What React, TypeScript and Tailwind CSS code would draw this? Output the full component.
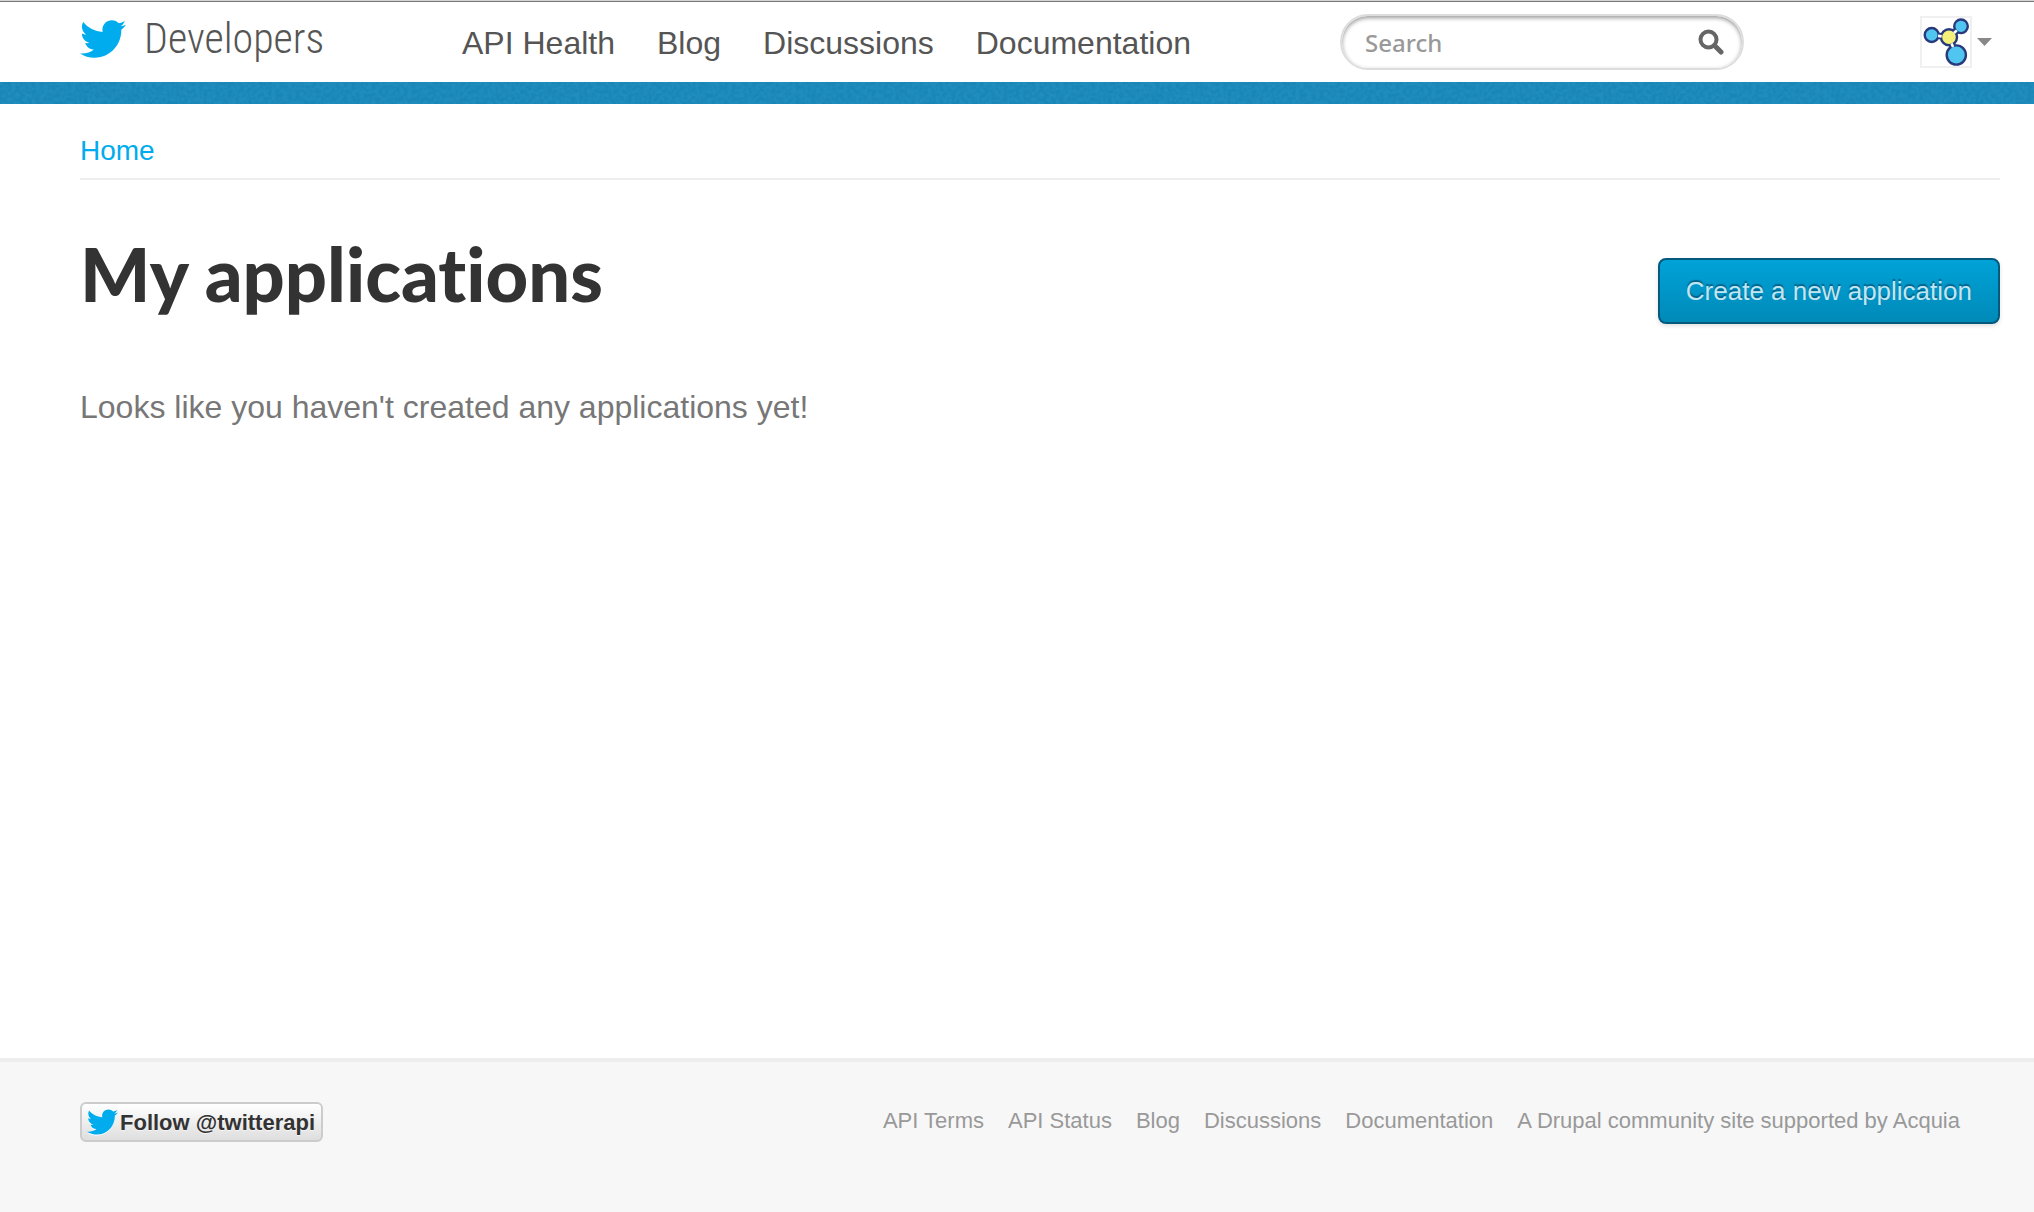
function Bird({ className }: { className: string }) {
  return (
    <svg viewBox="0 48 512 416" className={className} fill="#00aced" aria-hidden="true">
      <path d="M459.37 151.716c.325 4.548.325 9.097.325 13.645 0 138.72-105.583 298.558-298.558 298.558-59.452 0-114.68-17.219-161.137-47.106 8.447.974 16.568 1.299 25.34 1.299 49.055 0 94.213-16.568 130.274-44.832-46.132-.975-84.792-31.188-98.112-72.772 6.498.974 12.995 1.624 19.818 1.624 9.421 0 18.843-1.3 27.614-3.573-48.081-9.747-84.143-51.98-84.143-102.985v-1.299c13.969 7.797 30.214 12.67 47.431 13.319-28.264-18.843-46.781-51.005-46.781-87.391 0-19.492 5.197-37.36 14.294-52.954 51.655 63.675 129.3 105.258 216.365 109.807-1.624-7.797-2.599-15.918-2.599-24.04 0-57.828 46.782-104.934 104.934-104.934 30.213 0 57.502 12.67 76.67 33.137 23.715-4.548 46.456-13.32 66.599-25.34-7.798 24.366-24.366 44.833-46.132 57.827 21.117-2.273 41.584-8.122 60.426-16.243-14.292 20.791-32.161 39.308-52.628 54.253z" />
    </svg>
  );
}

function Molecule() {
  return (
    <svg viewBox="0 0 48 48" className="size-12" aria-hidden="true">
      <g stroke="#283a7c" strokeWidth="6.5">
        <path d="M10 17 27 19.3 39 8.3M27 19.3 34.3 37" fill="none" />
      </g>
      <g stroke="#283a7c" strokeWidth="2.4" fill="#4fc5f0">
        <circle cx="9.7" cy="17" r="7" />
        <circle cx="39" cy="8.3" r="6.8" />
        <circle cx="34.3" cy="37" r="9.6" />
        <circle cx="27" cy="19.3" r="8" fill="#f5f07a" />
      </g>
      <path d="M16 17.9 19.7 18.4M32 15 34.8 12.4M29.6 25.6 31 29" stroke="#fff" strokeWidth="2.6" fill="none" />
    </svg>
  );
}

const navItems = ["API Health", "Blog", "Discussions", "Documentation"];
const footerItems = [
  "API Terms",
  "API Status",
  "Blog",
  "Discussions",
  "Documentation",
  "A Drupal community site supported by Acquia",
];

export default function App() {
  return (
    <div className="flex min-h-screen flex-col bg-white font-['Liberation_Sans',Arial,sans-serif]">
      <header>
        <div className="h-[2px] border-b border-[#777] bg-[#d5d5d5]" />
        <div className="flex h-20 items-center pr-[34px] pl-20">
          <div className="flex flex-1 items-center">
            <a href="#home" className="flex w-[382px] shrink-0 items-center gap-[18px] pb-1.5">
              <Bird className="h-[38px] w-[46px]" />
              <span className="font-['Roboto_Condensed',Roboto,sans-serif] text-[42px] leading-[48px] font-light text-[#555]">
                Developers
              </span>
            </a>
            <nav className="flex gap-[42px] pt-0.5 text-[32px] whitespace-nowrap text-[#555]">
              {navItems.map((item) => (
                <a key={item} href="#nav">
                  {item}
                </a>
              ))}
            </nav>
          </div>
          <form
            role="search"
            className="mr-44 flex h-14 w-[404px] items-center rounded-full border-2 border-[#ddd] pr-[18px] pl-[23px] shadow-[inset_0_2px_4px_rgba(0,0,0,0.4)]"
          >
            <input
              type="text"
              aria-label="Search"
              placeholder="Search"
              className="min-w-0 flex-1 bg-transparent pt-0.5 font-['Noto_Sans',sans-serif] text-[24px] font-medium text-[#555] outline-none placeholder:text-[#999]"
            />
            <button type="button" aria-label="Submit search">
              <svg viewBox="0 0 26 26" className="size-[26px]" fill="none" stroke="#666" strokeWidth="4">
                <circle cx="10.5" cy="10.5" r="8" />
                <path d="M16.5 16.5 23 23" strokeWidth="5" strokeLinecap="round" />
              </svg>
            </button>
          </form>
          <button type="button" aria-label="Account menu" className="mr-2 flex items-center gap-[5px]">
            <span className="border-2 border-[#f0f0f0]">
              <Molecule />
            </span>
            <svg viewBox="0 0 15 8" className="h-2 w-[15px]" fill="#888" aria-hidden="true">
              <path d="M0 0H15L7.5 8Z" />
            </svg>
          </button>
        </div>
        <div className="h-[22px] bg-[#1a86b6]">
          <svg className="h-full w-full opacity-25" aria-hidden="true">
            <filter id="grain" x="0" y="0" width="100%" height="100%" colorInterpolationFilters="sRGB">
              <feTurbulence type="fractalNoise" baseFrequency="0.25" numOctaves="2" seed="4" />
              <feColorMatrix values="0 0 0 0 0.18  0 0 0 0 0.64  0 0 0 0 0.84  3 0 0 0 -1" />
            </filter>
            <rect width="100%" height="100%" filter="url(#grain)" />
          </svg>
        </div>
      </header>

      <main className="flex-1 pr-[34px] pl-20">
        <nav aria-label="Breadcrumb" className="border-b-2 border-[#eee] pt-[31px] pb-[11px] text-[28px] leading-8">
          <a href="#home" className="text-[#00aced]">
            Home
          </a>
        </nav>
        <div className="flex items-start justify-between pt-[50px]">
          <h1 className="font-['Lato',sans-serif] text-[74px] leading-[88px] font-black text-[#333] [font-variant-ligatures:none]">
            My applications
          </h1>
          <button
            type="button"
            className="mt-7 h-[66px] rounded-lg border-2 border-[#05597c] bg-linear-to-b from-[#00a2d8] to-[#008ab8] px-[26px] text-[26px] text-[#c2e5f1] shadow-[0_2px_4px_rgba(0,0,0,0.12)] text-shadow-[0_-2px_1px_rgba(0,60,90,0.6)]"
          >
            Create a new application
          </button>
        </div>
        <p className="pt-[63px] text-[32px] leading-10 text-[#777]">
          Looks like you haven't created any applications yet!
        </p>
      </main>

      <footer className="flex h-[154px] items-start justify-between border-t-4 border-[#ededed] bg-[#f7f7f7] pt-10 pr-[74px] pl-20">
        <a
          href="#follow"
          className="flex h-10 items-center gap-[2px] rounded-md border-2 border-[#ccc] bg-linear-to-b from-white to-[#dedede] pr-1.5 pl-[5px] text-[22px] font-bold text-[#333] text-shadow-[0_1px_0_rgba(255,255,255,0.6)]"
        >
          <Bird className="h-[26px] w-[31px] drop-shadow-[0_1px_0_#fff]" />
          Follow @twitterapi
        </a>
        <ul className="flex gap-6 pt-[5px] text-[22px] leading-7 whitespace-nowrap text-[#999]">
          {footerItems.map((item) => (
            <li key={item}>
              <a href="#footer">{item}</a>
            </li>
          ))}
        </ul>
      </footer>
    </div>
  );
}
